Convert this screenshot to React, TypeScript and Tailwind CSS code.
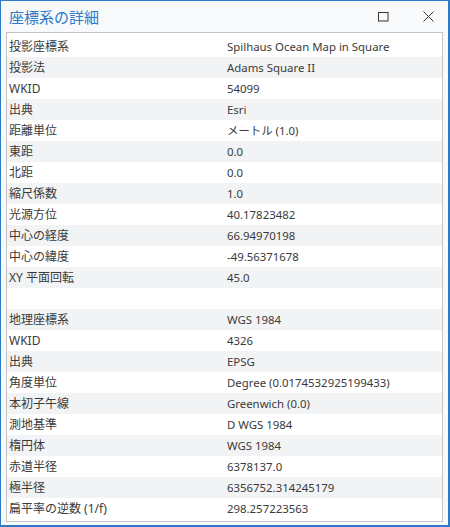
import React from "react";

type Row = [string, string];

const projected: Row[] = [
  ["投影座標系", "Spilhaus Ocean Map in Square"],
  ["投影法", "Adams Square II"],
  ["WKID", "54099"],
  ["出典", "Esri"],
  ["距離単位", "メートル (1.0)"],
  ["東距", "0.0"],
  ["北距", "0.0"],
  ["縮尺係数", "1.0"],
  ["光源方位", "40.17823482"],
  ["中心の経度", "66.94970198"],
  ["中心の緯度", "-49.56371678"],
  ["XY 平面回転", "45.0"],
];

const geographic: Row[] = [
  ["地理座標系", "WGS 1984"],
  ["WKID", "4326"],
  ["出典", "EPSG"],
  ["角度単位", "Degree (0.0174532925199433)"],
  ["本初子午線", "Greenwich (0.0)"],
  ["測地基準", "D WGS 1984"],
  ["楕円体", "WGS 1984"],
  ["赤道半径", "6378137.0"],
  ["極半径", "6356752.314245179"],
  ["扁平率の逆数 (1/f)", "298.257223563"],
];

// blank spacer row between the two sections
const rows: Row[] = [...projected, ["", ""], ...geographic];

export default function App() {
  return (
    <div
      className="flex h-[527px] w-[450px] flex-col border-t border-l border-r-2 border-b-2 border-[#2b7bc9] bg-[#f8f9fa] text-[#3a3a3a]"
      style={{ fontFamily: '"Noto Sans", "Noto Sans CJK JP", sans-serif' }}
    >
      <div className="flex h-[31px] items-center pl-[8px] pr-[14px]">
        <h1 className="flex-1 text-[15px] leading-none text-[#2b7bc9]" style={{ fontFamily: '"Noto Sans CJK JP", sans-serif' }}>
          座標系の詳細
        </h1>
        <svg width="11" height="10" viewBox="0 0 11 10" className="mr-[34px]">
          <rect x="0.5" y="0.5" width="9.5" height="8.5" fill="none" stroke="#333" strokeWidth="1" />
        </svg>
        <svg width="11" height="11" viewBox="0 0 11 11">
          <path d="M0.5 0.5 L10.5 10.5 M10.5 0.5 L0.5 10.5" stroke="#333" strokeWidth="1" />
        </svg>
      </div>
      <div className="mx-[5px] mb-[3px] flex-1 border border-[#c3c3c3] bg-white pt-[3px]">
        {rows.map(([label, value], i) => (
          <div
            key={i}
            className={
              "grid h-[21px] grid-cols-[220px_1fr] items-center leading-none " +
              (i % 2 === 1 ? "bg-[#f2f3f4]" : "bg-white")
            }
          >
            <span className="pl-[2px] text-[12px]">{label}</span>
            <span className="text-[11.4px]">{value}</span>
          </div>
        ))}
      </div>
    </div>
  );
}
